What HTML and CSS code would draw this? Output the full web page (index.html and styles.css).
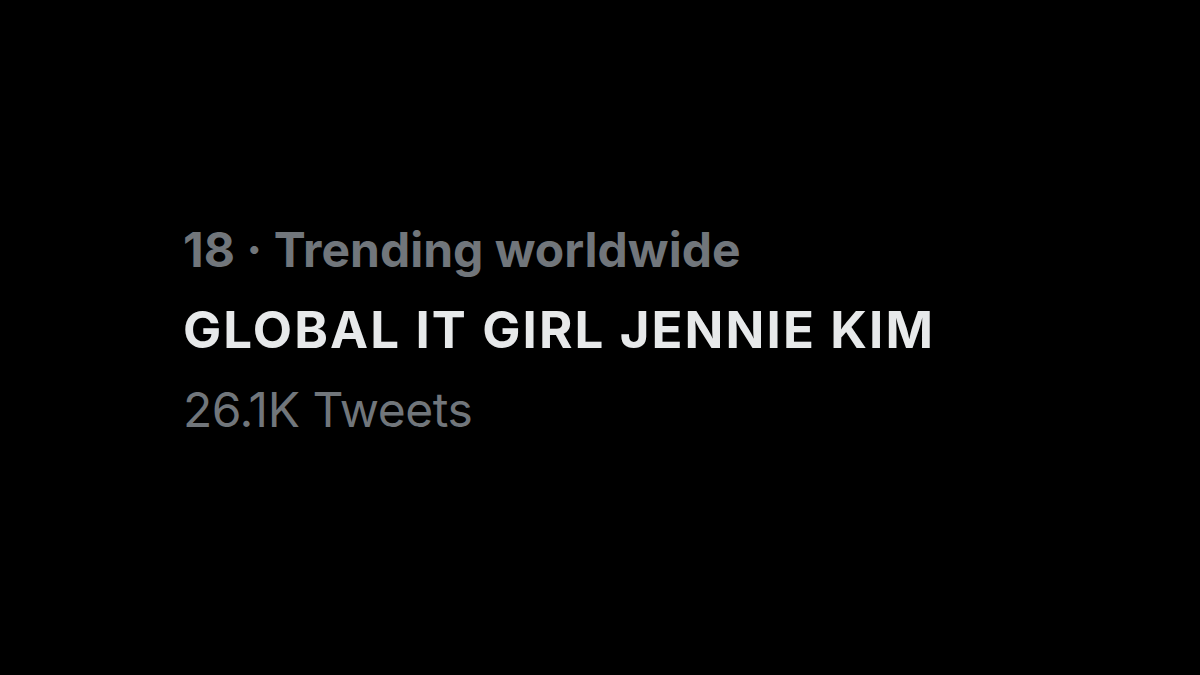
FILE: index.html
```html
<!DOCTYPE html>
<html>
<head>
<meta charset="utf-8">
<link rel="stylesheet" href="styles.css">
</head>
<body>
<main class="trend">
  <div class="meta">18 · Trending worldwide</div>
  <div class="title">GLOBAL IT GIRL JENNIE KIM</div>
  <div class="count">26.1K Tweets</div>
</main>
</body>
</html>
```
FILE: styles.css
```css
html, body {
  margin: 0;
  padding: 0;
  background: #000;
  width: 1200px;
  height: 675px;
  overflow: hidden;
}
.trend {
  display: flex;
  flex-direction: column;
  padding: 210px 0 0 183px;
  font-family: Inter, "Liberation Sans", sans-serif;
}
.meta, .title, .count {
  line-height: 80px;
  height: 80px;
  white-space: nowrap;
}
.meta {
  color: #71767b;
  font-size: 48px;
  font-weight: 700;
}
.title {
  color: #e7e9ea;
  font-size: 51px;
  font-weight: 700;
  letter-spacing: 2.1px;
}
.count {
  color: #71767b;
  font-size: 48px;
  font-weight: 400;
  letter-spacing: -0.5px;
}
```
